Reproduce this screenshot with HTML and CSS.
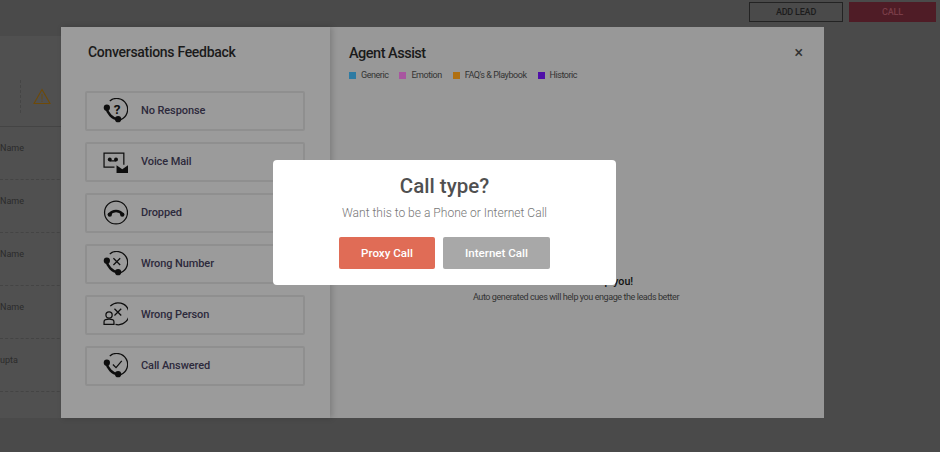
FILE: index.html
```html
<!DOCTYPE html>
<html lang="en">
<head>
  <meta charset="UTF-8" />
  <title>Call type</title>
  <link rel="stylesheet" href="styles.css">
</head>
<body>
  <!-- Page behind the overlay -->
  <div class="topbar">
    <button class="add-lead">ADD LEAD</button>
    <button class="call">CALL</button>
  </div>
  <div class="leads">
    <div class="leads-head">
      <span class="dash"></span>
      <svg class="warn" viewBox="0 0 18 17"><path d="M9 1.500 17 15.500H1Z" fill="none" stroke="#6e4a08" stroke-width="1.100"/><path d="M9 6v5.500M9 12.600v1.200" stroke="#6e4a08" stroke-width="0.900"/></svg>
    </div>
    <div class="lead">Name</div>
    <div class="lead">Name</div>
    <div class="lead">Name</div>
    <div class="lead">Name</div>
    <div class="lead">upta</div>
  </div>

  <!-- Feedback modal -->
  <div class="modal">
    <div class="feedback">
      <h2>Conversations Feedback</h2>
      <div class="options">
        <div class="option">
          <svg class="icon" viewBox="0 0 24 24">
            <path class="ring" d="M6.500 2.800A10.500 10.500 0 1 1 17 20.700"/>
            <path class="handset" d="M3.500 10C4 14.500 9 20 14 20.300"/>
            <circle cx="3.700" cy="9.300" r="3"/><circle cx="14.500" cy="20.300" r="3"/>
            <text x="13.500" y="15.500" class="mark">?</text>
          </svg>
          <span>No Response</span>
        </div>
        <div class="option">
          <svg class="icon" viewBox="0 0 24 24">
            <path class="ring" d="M20 15V4H1V17.500H11"/>
            <circle cx="6.500" cy="10" r="1.900"/><circle cx="12.500" cy="10" r="1.900"/>
            <path class="ring" d="M6.500 11.400H12.500"/>
            <path d="M13 15.500 18.500 19.500 24 15.500V23H13Z"/>
          </svg>
          <span>Voice Mail</span>
        </div>
        <div class="option">
          <svg class="icon" viewBox="0 0 24 24">
            <circle class="ring" cx="12.500" cy="12" r="11"/>
            <path class="handset" d="M6.500 13.500C9 9.500 16 9.500 18.500 13.500"/>
            <circle cx="6.500" cy="14" r="2.100"/><circle cx="18.500" cy="14" r="2.100"/>
          </svg>
          <span>Dropped</span>
        </div>
        <div class="option">
          <svg class="icon" viewBox="0 0 24 24">
            <path class="ring" d="M6.500 2.800A10.500 10.500 0 1 1 17 20.700"/>
            <path class="handset" d="M3.500 10C4 14.500 9 20 14 20.300"/>
            <circle cx="3.700" cy="9.300" r="3"/><circle cx="14.500" cy="20.300" r="3"/>
            <path class="ring" d="M10 7 16.500 13.500M16.500 7 10 13.500"/>
          </svg>
          <span>Wrong Number</span>
        </div>
        <div class="option">
          <svg class="icon" viewBox="0 0 24 24">
            <path class="ring" d="M7 4A10.500 10.500 0 1 1 12 21.500"/>
            <circle class="ring" cx="5.800" cy="12.500" r="3"/>
            <path class="ring" d="M1 21.500V19C1 17 3 16.500 5.800 16.500S10.500 17 10.500 19V21.500Z"/>
            <path class="ring" d="M11 6.500 17.500 13M17.500 6.500 11 13"/>
          </svg>
          <span>Wrong Person</span>
        </div>
        <div class="option">
          <svg class="icon" viewBox="0 0 24 24">
            <path class="ring" d="M6.500 2.800A10.500 10.500 0 1 1 17 20.700"/>
            <path class="handset" d="M3.500 10C4 14.500 9 20 14 20.300"/>
            <circle cx="3.700" cy="9.300" r="3"/><circle cx="14.500" cy="20.300" r="3"/>
            <path class="ring" d="M9.500 11 12.500 14 18 7.500"/>
          </svg>
          <span>Call Answered</span>
        </div>
      </div>
    </div>

    <div class="assist">
      <div class="assist-head">
        <h2>Agent Assist</h2>
        <span class="close">&times;</span>
      </div>
      <div class="legend">
        <span class="key"><i class="generic"></i>Generic</span>
        <span class="key"><i class="emotion"></i>Emotion</span>
        <span class="key"><i class="faq"></i>FAQ's &amp; Playbook</span>
        <span class="key"><i class="historic"></i>Historic</span>
      </div>
      <div class="empty">
        <h3>We are here to help you!</h3>
        <p>Auto generated cues will help you engage the leads better</p>
      </div>
    </div>
  </div>

  <!-- Call type dialog -->
  <div class="dialog">
    <h1>Call type?</h1>
    <p>Want this to be a Phone or Internet Call</p>
    <div class="actions">
      <button class="proxy">Proxy Call</button>
      <button class="internet">Internet Call</button>
    </div>
  </div>
</body>
</html>
```

FILE: styles.css
```css
* { margin: 0; padding: 0; box-sizing: border-box; }

body, html {
  height: 100%;
  font-family: Roboto, sans-serif;
  background: #4a4a4a;
  overflow: hidden;
}

button { font-family: Roboto, sans-serif; border: none; }

.topbar {
  display: flex;
  justify-content: flex-end;
  gap: 6px;
  height: 36px;
  padding: 2px 4px 0 0;
}

.add-lead, .call {
  height: 20px;
  font-size: 9px;
  font-weight: 500;
  letter-spacing: -0.2px;
}

.add-lead {
  width: 94px;
  background: transparent;
  border: 1px solid #232323;
  color: #1c1c1c;
}

.call {
  width: 87px;
  background: #4f1c26;
  color: #7a3d48;
}

.leads {
  width: 70px;
  height: 382px;
  background: #505050;
  font-size: 9px;
  color: #2b2b2b;
}

.leads-head {
  display: flex;
  align-items: center;
  gap: 12px;
  height: 91px;
  padding: 31px 0 0 20px;
  border-bottom: 1px solid #444;
}

.dash {
  height: 33px;
  border-left: 1px dashed #454545;
}

.warn { width: 18px; height: 17px; }

.lead {
  height: 53px;
  padding-top: 16px;
  border-bottom: 1px dashed #444;
}

.modal {
  position: absolute;
  left: 61px;
  top: 27px;
  display: flex;
  width: 763px;
  height: 391px;
  background: #989898;
}

.feedback {
  width: 269px;
  padding: 17px 24px;
  background: #9b9b9b;
  box-shadow: 2px 0 6px rgba(0, 0, 0, 0.18);
}

.feedback h2 {
  margin-left: 3px;
  font-size: 14px;
  line-height: 17px;
  font-weight: 500;
  letter-spacing: -0.3px;
  color: #1a1a1a;
}

.options {
  display: flex;
  flex-direction: column;
  gap: 11px;
  margin-top: 30px;
}

.option {
  display: flex;
  align-items: center;
  gap: 13px;
  width: 220px;
  height: 40px;
  padding: 0 0 1px 16px;
  border: 2px solid #8f8f8f;
  border-radius: 2px;
  font-size: 11px;
  font-weight: 500;
  letter-spacing: -0.1px;
  color: #2d2a3c;
}

.icon { width: 25px; height: 25px; flex: none; fill: #0e0e0e; }
.ring { fill: none; stroke: #0e0e0e; stroke-width: 1.200; }
.handset { fill: none; stroke: #0e0e0e; stroke-width: 2.400; }
.mark { font-size: 13px; font-weight: 700; text-anchor: middle; font-family: Roboto, sans-serif; }

.assist {
  flex: 1;
  display: flex;
  flex-direction: column;
  padding: 17px 21px 0 19px;
}

.assist-head {
  display: flex;
  justify-content: space-between;
  align-items: center;
}

.assist-head h2 {
  font-size: 14.500px;
  line-height: 19px;
  font-weight: 500;
  letter-spacing: -0.5px;
  color: #1a1a1a;
}

.close { font-size: 16px; line-height: 16px; font-weight: 500; color: #333; margin-top: -2px; }

.legend {
  display: flex;
  gap: 11px;
  margin-top: 6px;
  font-size: 9px;
  line-height: 12px;
  letter-spacing: -0.45px;
  color: #333;
}

.key { display: flex; align-items: center; gap: 5px; }
.key i { width: 7px; height: 7px; }
.generic { background: #2e7ba3; }
.emotion { background: #a856a0; }
.faq { background: #b06f10; }
.historic { background: #4f0fa8; }

.empty {
  margin-top: 194px;
  text-align: center;
}

.empty h3 { font-size: 10.700px; line-height: 14px; font-weight: 500; color: #111; }
.empty p { margin-top: 2px; font-size: 9px; line-height: 12px; letter-spacing: -0.42px; color: #333; }

.dialog {
  position: absolute;
  left: 273px;
  top: 160px;
  width: 343px;
  height: 125px;
  padding-top: 14px;
  background: #fff;
  border-radius: 4px;
  text-align: center;
}

.dialog h1 {
  font-size: 20.500px;
  line-height: 24px;
  font-weight: 500;
  color: #505050;
}

.dialog p {
  margin-top: 8px;
  font-size: 12.050px;
  line-height: 15px;
  font-weight: 300;
  color: #777;
}

.actions {
  display: flex;
  justify-content: center;
  gap: 8px;
  margin-top: 16px;
}

.actions button {
  height: 32px;
  border-radius: 2px;
  color: #fff;
  font-size: 11.600px;
  font-weight: 500;
}

.proxy { width: 96px; background: #e06c56; }
.internet { width: 107px; background: #a8a8a8; }
```
